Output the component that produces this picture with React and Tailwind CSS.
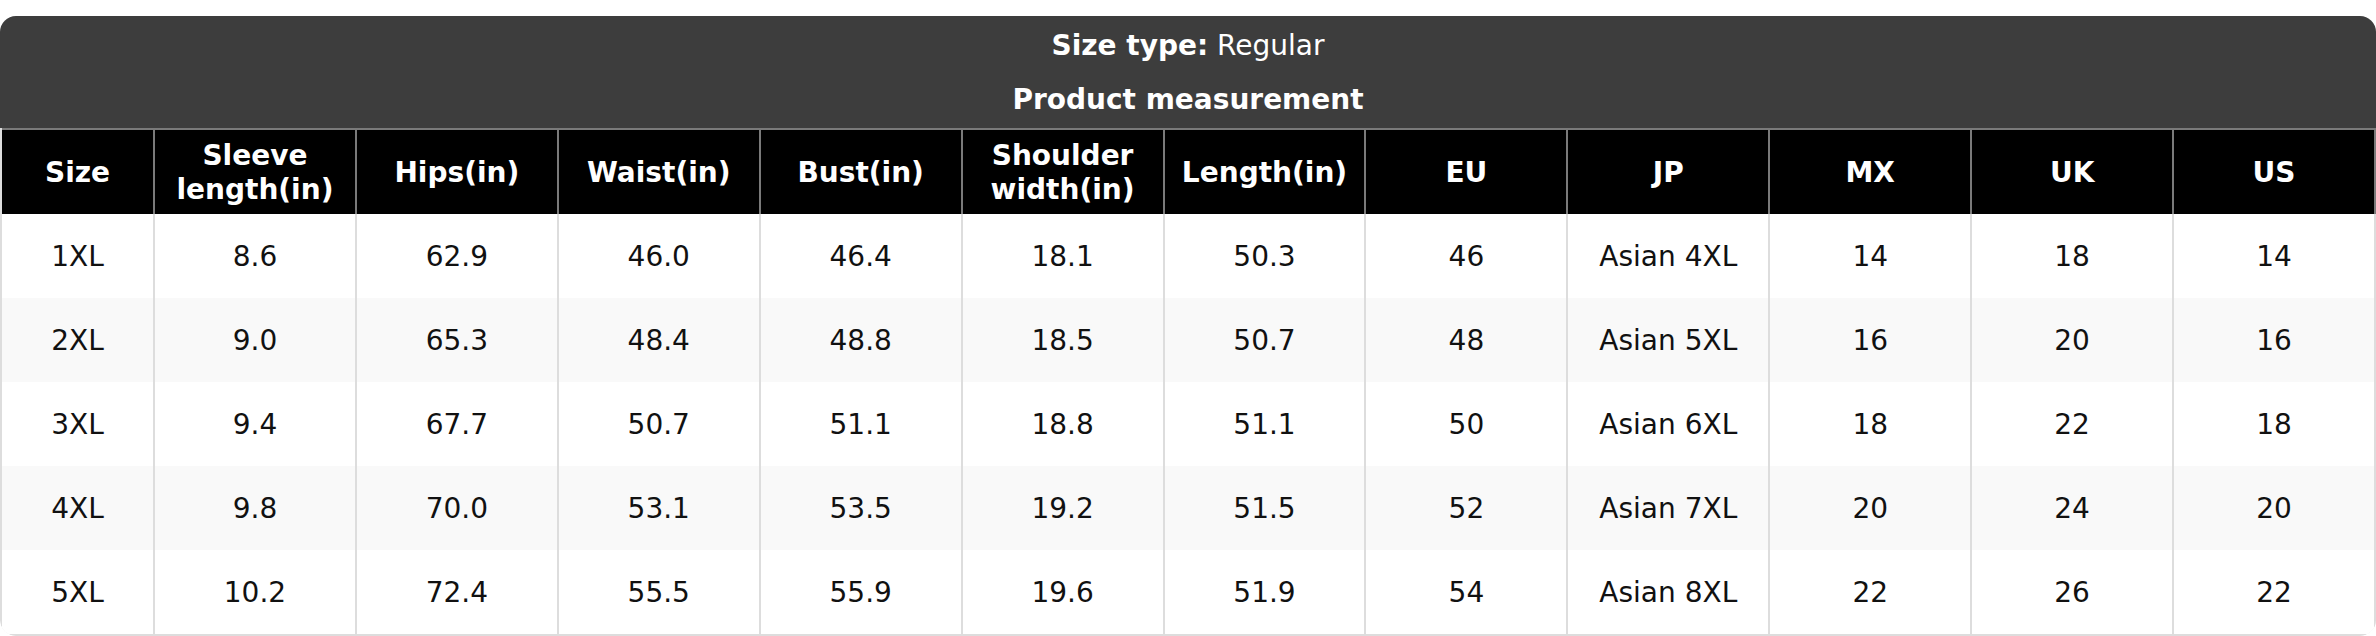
import React from 'react';

const columns = [
  'Size',
  'Sleeve length(in)',
  'Hips(in)',
  'Waist(in)',
  'Bust(in)',
  'Shoulder width(in)',
  'Length(in)',
  'EU',
  'JP',
  'MX',
  'UK',
  'US',
];

const rows = [
  ['1XL', '8.6', '62.9', '46.0', '46.4', '18.1', '50.3', '46', 'Asian 4XL', '14', '18', '14'],
  ['2XL', '9.0', '65.3', '48.4', '48.8', '18.5', '50.7', '48', 'Asian 5XL', '16', '20', '16'],
  ['3XL', '9.4', '67.7', '50.7', '51.1', '18.8', '51.1', '50', 'Asian 6XL', '18', '22', '18'],
  ['4XL', '9.8', '70.0', '53.1', '53.5', '19.2', '51.5', '52', 'Asian 7XL', '20', '24', '20'],
  ['5XL', '10.2', '72.4', '55.5', '55.9', '19.6', '51.9', '54', 'Asian 8XL', '22', '26', '22'],
];

const fontStack = { fontFamily: '"DejaVu Sans", Verdana, sans-serif' };

export default function App() {
  return (
    <div className="bg-white w-[2376px] h-[636px] pt-[16px]" style={fontStack}>
      <div className="rounded-[16px] overflow-hidden">
        {/* Title block */}
        <div className="bg-[#3d3d3d] text-white text-[28px] leading-[34px] text-center">
          <div className="pt-[13px] pb-[7px]">
            <span className="font-bold">Size type:</span> Regular
          </div>
          <div className="pt-[13px] pb-[11px] font-bold">Product measurement</div>
        </div>

        {/* Table */}
        <div className="border-l-2 border-b-2 border-[#dddddd] rounded-b-[16px]">
          <div className="grid grid-cols-[153px_repeat(11,minmax(0,1fr))] border-t-2 border-[#7a7a7a] bg-black h-[86px]">
            {columns.map((col) => (
              <div
                key={col}
                className="flex items-center justify-center text-center px-2 pt-[2px] border-r-2 border-[#7a7a7a] text-white font-bold text-[28px] leading-[34px]"
              >
                {col}
              </div>
            ))}
          </div>
          {rows.map((row, i) => (
            <div
              key={row[0]}
              className={`grid grid-cols-[153px_repeat(11,minmax(0,1fr))] h-[84px] ${
                i % 2 === 1 ? 'bg-[#f9f9f9]' : 'bg-white'
              }`}
            >
              {row.map((cell, j) => (
                <div
                  key={j}
                  className="flex items-center justify-center pt-[2px] border-r-2 border-[#dddddd] text-[#111111] text-[28px] leading-[34px]"
                >
                  {cell}
                </div>
              ))}
            </div>
          ))}
        </div>
      </div>
    </div>
  );
}
